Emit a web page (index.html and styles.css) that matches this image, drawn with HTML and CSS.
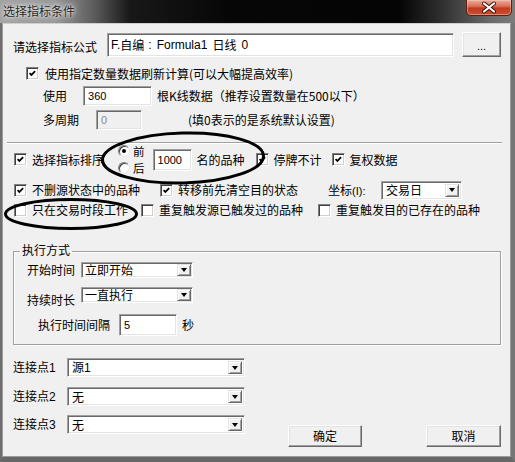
FILE: index.html
```html
<!DOCTYPE html>
<html lang="zh">
<head>
<meta charset="utf-8">
<title>选择指标条件</title>
<link rel="stylesheet" href="styles.css">
</head>
<body>
<div class="win">
  <div class="titlebar">
    <span class="title">选择指标条件</span>
    <div class="close">
      <svg width="44" height="15" viewBox="0 0 44 15">
        <path d="M17 3.5 L27 11.5 M27 3.5 L17 11.5" stroke="#3a0d06" stroke-width="4" stroke-linecap="round"/>
        <path d="M17 3.5 L27 11.5 M27 3.5 L17 11.5" stroke="#fff" stroke-width="2.2" stroke-linecap="round"/>
      </svg>
    </div>
  </div>
  <div class="frame">
    <div class="client">
      <div class="row r1">
        <span class="lbl formula-lbl">请选择指标公式</span>
        <div class="field formula"><span class="lat">F.</span>自编<span class="lat colon">:</span><span class="lat">Formula1</span><span class="gapped">日线</span><span class="lat gapped">0</span></div>
        <div class="btn dots">...</div>
      </div>

      <div class="row r2">
        <span class="cb on"><svg viewBox="0 0 13 13"><path d="M3 6 L5.2 8.2 L9.6 3.6" fill="none" stroke="#000" stroke-width="2"/></svg></span>
        <span class="cbl wide">使用指定数量数据刷新计算(可以大幅提高效率)</span>
      </div>

      <div class="row r3">
        <span class="lbl">使用</span>
        <div class="field num count">360</div>
        <span class="after-count">根K线数据（推荐设置数量在500以下）</span>
      </div>

      <div class="row r4">
        <span class="lbl">多周期</span>
        <div class="field num disabled period">0</div>
        <span class="after-period">(填0表示的是系统默认设置)</span>
      </div>

      <div class="sep"></div>

      <div class="row r5">
        <span class="cb on"><svg viewBox="0 0 13 13"><path d="M3 6 L5.2 8.2 L9.6 3.6" fill="none" stroke="#000" stroke-width="2"/></svg></span>
        <span class="cbl">选择指标排序</span>
        <div class="radios">
          <div class="radio-item"><span class="radio sel"></span><span class="radio-text">前</span></div>
          <div class="radio-item"><span class="radio"></span><span class="radio-text">后</span></div>
        </div>
        <div class="field num topn">1000</div>
        <span class="after-topn">名的品种</span>
        <span class="cb on gap-suspend"><svg viewBox="0 0 13 13"><path d="M3 6 L5.2 8.2 L9.6 3.6" fill="none" stroke="#000" stroke-width="2"/></svg></span>
        <span class="cbl">停牌不计</span>
        <span class="cb on gap-adjust"><svg viewBox="0 0 13 13"><path d="M3 6 L5.2 8.2 L9.6 3.6" fill="none" stroke="#000" stroke-width="2"/></svg></span>
        <span class="cbl">复权数据</span>
      </div>

      <div class="row r6">
        <span class="cb on"><svg viewBox="0 0 13 13"><path d="M3 6 L5.2 8.2 L9.6 3.6" fill="none" stroke="#000" stroke-width="2"/></svg></span>
        <span class="cbl">不删源状态中的品种</span>
        <span class="cb on gap-clear"><svg viewBox="0 0 13 13"><path d="M3 6 L5.2 8.2 L9.6 3.6" fill="none" stroke="#000" stroke-width="2"/></svg></span>
        <span class="cbl">转移前先清空目的状态</span>
        <span class="coord-lbl">坐标<span class="lat small">(I):</span></span>
        <div class="field combo coord"><span class="combo-text">交易日</span><span class="drop"></span></div>
      </div>

      <div class="row r7">
        <span class="cb"></span>
        <span class="cbl">只在交易时段工作</span>
        <span class="cb gap-src"></span>
        <span class="cbl">重复触发源已触发过的品种</span>
        <span class="cb gap-dst"></span>
        <span class="cbl">重复触发目的已存在的品种</span>
      </div>

      <div class="group">
        <div class="legend">执行方式</div>
        <div class="row ga">
          <span class="lbl">开始时间</span>
          <div class="field combo exec"><span class="combo-text">立即开始</span><span class="drop"></span></div>
        </div>
        <div class="row gb">
          <span class="lbl low">持续时长</span>
          <div class="field combo exec"><span class="combo-text">一直执行</span><span class="drop"></span></div>
        </div>
        <div class="row gc">
          <span class="lbl">执行时间间隔</span>
          <div class="field num interval">5</div>
          <span class="after-interval">秒</span>
        </div>
      </div>

      <div class="row conn c1">
        <span class="conn-lbl">连接点<span class="lat">1</span></span>
        <div class="field combo link"><span class="combo-text">源<span class="lat">1</span></span><span class="drop"></span></div>
      </div>
      <div class="row conn c2">
        <span class="conn-lbl">连接点<span class="lat">2</span></span>
        <div class="field combo link"><span class="combo-text">无</span><span class="drop"></span></div>
      </div>
      <div class="last">
        <div class="row conn">
          <span class="conn-lbl">连接点<span class="lat">3</span></span>
          <div class="field combo link"><span class="combo-text">无</span><span class="drop"></span></div>
        </div>
        <div class="btn ok">确定</div>
        <div class="btn cancel">取消</div>
      </div>
    </div>
  </div>

  <svg class="mark mark-sort" width="170" height="58" viewBox="0 0 170 58">
    <ellipse cx="84" cy="28" rx="80.5" ry="25" fill="none" stroke="#000" stroke-width="3" transform="rotate(-1.5 84 28)"/>
  </svg>
  <svg class="mark mark-trade" width="140" height="36" viewBox="0 0 140 36">
    <ellipse cx="69" cy="17" rx="65.5" ry="14.5" fill="none" stroke="#000" stroke-width="3"/>
  </svg>
</div>
</body>
</html>
```

FILE: styles.css
```css
* { box-sizing: border-box; }

body {
  margin: 0;
  font-family: "Noto Sans CJK SC", "Noto Sans CJK JP", sans-serif;
  font-size: 12px;
  line-height: 14px;
  color: #000;
  background: #000;
}

.win {
  position: relative;
  width: 515px;
  height: 462px;
  display: flex;
  flex-direction: column;
  overflow: hidden;
}

/* ---------- title bar ---------- */
.titlebar {
  flex: none;
  height: 23px;
  display: flex;
  background: linear-gradient(90deg, #a3a3a3 0, #989898 55px, #5a5a5a 95px, #181818 130px, #060606 230px, #050505 400px, #333 445px, #6a6a6a 490px, #7c7c7c 515px);
}

.title {
  padding: 4px 0 0 3px;
  color: #262626;
  font-size: 12px;
  text-shadow: 0 0 5px #e6e6e6, 0 0 9px #d8d8d8, 0 0 2px #f2f2f2;
}

.close {
  margin-left: auto;
  margin-right: 3px;
  width: 46px;
  height: 16px;
  border: 1px solid #5b1f14;
  border-top: none;
  border-radius: 0 0 5px 5px;
  background: linear-gradient(#e8ad9f 0, #d9735c 40%, #c23a20 55%, #c9502f 100%);
  box-shadow: inset 0 0 0 1px rgba(255, 210, 190, 0.45);
}

.close svg { display: block; }

/* ---------- frame / client ---------- */
.frame {
  flex: 1;
  display: flex;
  border-left: 2px solid #6e6e6e;
  border-right: 4px solid #767676;
  border-bottom: 5px solid #676767;
}

.client {
  flex: 1;
  background: #f0f0f0;
  border: 1px solid #9b9b9b;
  border-top-color: #cfcfcf;
  padding-left: 10px;
}

.row {
  display: flex;
  align-items: center;
  white-space: nowrap;
}

.lat { font-family: "Liberation Sans", sans-serif; font-size: 12px; }
.small { font-size: 11px; }

/* ---------- controls ---------- */
.field {
  background: #fff;
  border: 1px solid;
  border-color: #a0a0a0 #fff #fff #a0a0a0;
  box-shadow: inset 1px 1px 0 #696969, inset -1px -1px 0 #e3e3e3;
  display: flex;
  align-items: center;
}

.num {
  font-family: "Liberation Sans", sans-serif;
  font-size: 11px;
  padding-left: 4px;
}

.disabled {
  background: #f0f0f0;
  color: #8a8a8a;
}

.btn {
  background: #f0f0f0;
  border: 1px solid;
  border-color: #fff #696969 #696969 #fff;
  box-shadow: inset -1px -1px 0 #a0a0a0, inset 1px 1px 0 #e3e3e3;
  display: flex;
  align-items: center;
  justify-content: center;
}

.cb {
  position: relative;
  flex: none;
  width: 13px;
  height: 13px;
  background: #fff;
  border: 1px solid;
  border-color: #808080 #fff #fff #808080;
  box-shadow: inset 1px 1px 0 #404040, inset -1px -1px 0 #d4d0c8;
}

.cb svg {
  display: block;
  width: 11px;
  height: 11px;
}

.cbl { margin-left: 5px; }

.radio {
  flex: none;
  width: 12px;
  height: 12px;
  border-radius: 50%;
  background: #fff;
  border: 1px solid;
  border-color: #808080 #e8e8e8 #e8e8e8 #808080;
  box-shadow: inset 1px 1px 0 #404040;
  display: flex;
  align-items: center;
  justify-content: center;
}

.radio.sel::after {
  content: "";
  width: 4px;
  height: 4px;
  border-radius: 50%;
  background: #000;
}

.combo {
  justify-content: space-between;
  padding: 2px;
}

.combo-text { padding-left: 2px; line-height: 14px; }

.drop {
  flex: none;
  align-self: stretch;
  width: 14px;
  background: #f0f0f0;
  border: 1px solid;
  border-color: #e3e3e3 #696969 #696969 #e3e3e3;
  box-shadow: inset 1px 1px 0 #fff, inset -1px -1px 0 #a0a0a0;
  display: flex;
  align-items: center;
  justify-content: center;
}

.drop::after {
  content: "";
  border-top: 4px solid #000;
  border-left: 3.5px solid transparent;
  border-right: 3.5px solid transparent;
}

/* ---------- rows ---------- */
.r1 {
  margin-top: 8px;
  height: 25px;
}

.formula-lbl { width: 94px; padding-top: 5px; }

.formula {
  width: 347px;
  height: 24px;
  align-self: flex-end;
  padding-left: 3px;
}

.colon { margin: 0 5px 0 4px; }
.gapped { margin-left: 5px; }

.dots {
  width: 39px;
  height: 25px;
  margin-left: 8px;
  font-family: "Liberation Sans", sans-serif;
  font-size: 11px;
  padding-top: 2px;
}

.r2 {
  margin-top: 10px;
  height: 13px;
  padding-left: 13px;
}

.r2 .cbl { margin-left: 6px; }

.r3 {
  margin-top: 6px;
  height: 20px;
  padding-left: 30px;
}

.count { width: 69px; height: 20px; margin-left: 16px; }
.after-count { margin-left: 5px; }

.r4 {
  margin-top: 4px;
  height: 20px;
  padding-left: 30px;
}

.period { width: 46px; height: 20px; margin-left: 17px; }
.after-period { margin-left: 46px; }

.sep {
  margin: 12px 0 0 -6px;
  width: 495px;
  height: 2px;
  border-top: 1px solid #a0a0a0;
  border-bottom: 1px solid #fff;
}

.r5 {
  margin-top: 1px;
  height: 29px;
  padding-left: 1px;
}

.radios {
  margin: -2px 0 -2px 14px;
  display: flex;
  flex-direction: column;
  gap: 3px;
}

.radio-item {
  height: 14px;
  display: flex;
  align-items: center;
  gap: 3px;
}

.radio-text { font-size: 11.5px; line-height: 14px; }

.topn { width: 39px; height: 22px; margin-left: 8px; }
.after-topn { margin-left: 5px; }
.gap-suspend { margin-left: 11px; }
.gap-adjust { margin-left: 10px; }

.r6 {
  margin-top: 6px;
  height: 20px;
  padding-left: 1px;
}

.gap-clear { margin-left: 20px; }
.coord-lbl { margin-left: 30px; width: 53px; }
.coord { width: 81px; height: 19px; }

.r7 {
  margin-top: 3px;
  height: 14px;
  padding-left: 1px;
}

.gap-src { margin-left: 13px; }
.gap-dst { margin-left: 15px; }

/* ---------- group box ---------- */
.group {
  margin-top: 34px;
  width: 488px;
  height: 94px;
  border: 1px solid #a0a0a0;
  box-shadow: inset 1px 1px 0 #fff, 1px 1px 0 #fff;
}

.legend {
  width: fit-content;
  margin: -9px 0 -5px 6px;
  padding: 0 2px;
  background: #f0f0f0;
}

.ga {
  margin-top: 10px;
  height: 16px;
  padding-left: 13px;
}

.gb {
  margin-top: 9px;
  height: 16px;
  padding-left: 13px;
}

.low { align-self: flex-end; margin-bottom: -4px; }

.exec { width: 112px; height: 16px; margin-left: 6px; padding: 1px; }
.exec .drop { width: 14px; }

.gc {
  margin-top: 11px;
  height: 22px;
  padding-left: 24px;
}

.interval { width: 58px; height: 22px; margin-left: 9px; }
.after-interval { margin-left: 5px; }

/* ---------- connection rows ---------- */
.conn { height: 19px; }
.c1 { margin-top: 13px; }
.c2 { margin-top: 10px; }

.conn-lbl { width: 54px; }
.link { width: 178px; height: 19px; }

.last {
  margin-top: 9px;
  display: flex;
  align-items: flex-start;
}

.ok {
  margin: 10px 0 0 43px;
  width: 74px;
  height: 22px;
}

.cancel {
  margin: 10px 0 0 64px;
  width: 75px;
  height: 22px;
}

/* ---------- hand-drawn annotation marks ---------- */
.mark {
  position: absolute;
  pointer-events: none;
}

.mark-sort { left: 99px; top: 130px; }
.mark-trade { left: 2px; top: 197px; }
```
